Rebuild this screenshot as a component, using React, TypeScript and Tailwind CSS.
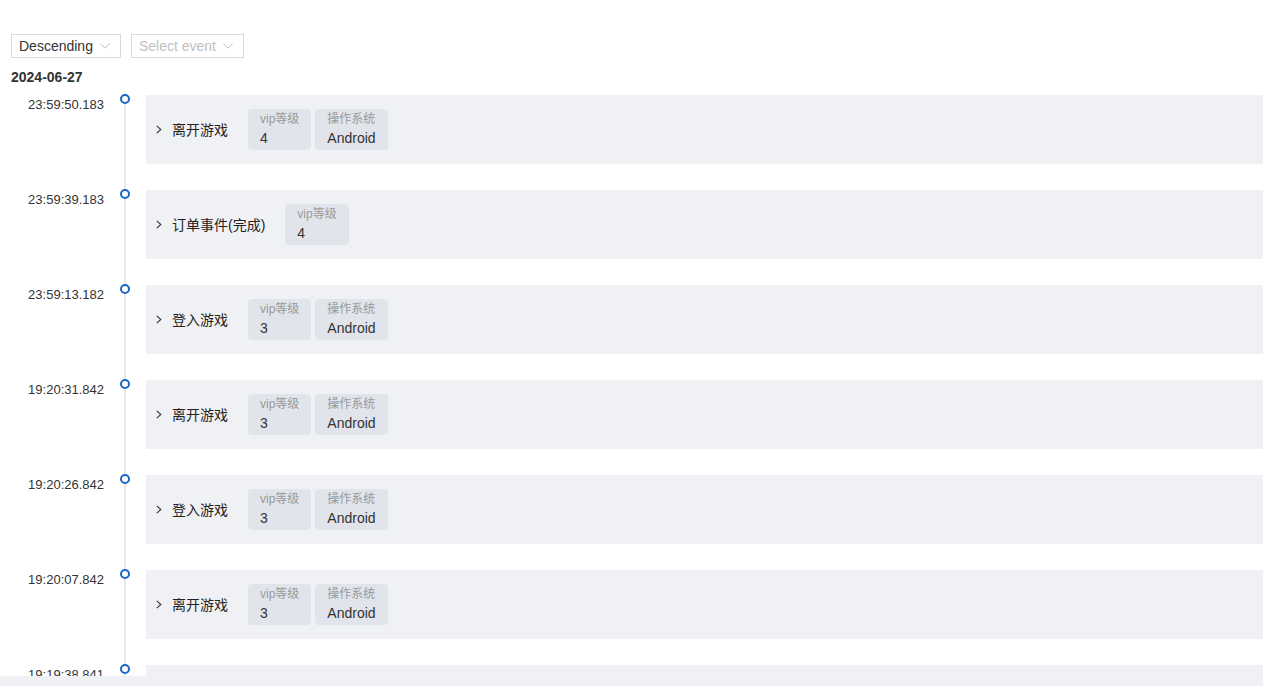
import React from "react";

type Tag = { label: string; value: string };
type Row = { time: string; title: string; tags: Tag[] };

const rows: Row[] = [
  { time: "23:59:50.183", title: "离开游戏", tags: [{ label: "vip等级", value: "4" }, { label: "操作系统", value: "Android" }] },
  { time: "23:59:39.183", title: "订单事件(完成)", tags: [{ label: "vip等级", value: "4" }] },
  { time: "23:59:13.182", title: "登入游戏", tags: [{ label: "vip等级", value: "3" }, { label: "操作系统", value: "Android" }] },
  { time: "19:20:31.842", title: "离开游戏", tags: [{ label: "vip等级", value: "3" }, { label: "操作系统", value: "Android" }] },
  { time: "19:20:26.842", title: "登入游戏", tags: [{ label: "vip等级", value: "3" }, { label: "操作系统", value: "Android" }] },
  { time: "19:20:07.842", title: "离开游戏", tags: [{ label: "vip等级", value: "3" }, { label: "操作系统", value: "Android" }] },
  { time: "19:19:38.841", title: "登入游戏", tags: [{ label: "vip等级", value: "3" }, { label: "操作系统", value: "Android" }] },
];

const font = { fontFamily: '"Liberation Sans", "Noto Sans CJK SC", sans-serif' };

function Chevron() {
  return (
    <svg width="10" height="6" viewBox="0 0 10 6" className="ml-[7px]">
      <polyline points="0.5,0.5 5,5.2 9.5,0.5" fill="none" stroke="#bfbfbf" strokeWidth="1" />
    </svg>
  );
}

function Select({ text, placeholder }: { text: string; placeholder?: boolean }) {
  return (
    <div className="flex h-[24px] items-center border border-[#d9d9d9] bg-white pl-[7px] pr-[10px]">
      <span className={`text-[14px] leading-none ${placeholder ? "text-[#bfbfbf]" : "text-[#333]"}`}>{text}</span>
      <Chevron />
    </div>
  );
}

export default function App() {
  return (
    <div className="h-[686px] w-full overflow-hidden bg-white" style={font}>
      <div className="h-[676px] overflow-hidden">
        <div className="flex gap-[10px] pl-[11px] pt-[34px]">
          <Select text="Descending" />
          <Select text="Select event" placeholder />
        </div>
        <div className="pl-[11px] pt-[9px] text-[14px] font-bold leading-[20px] text-[#333]">2024-06-27</div>
        <div className="pt-[8px]">
          {rows.map((r, i) => (
            <div key={i} className="flex h-[95px]">
              <div className="w-[104px] shrink-0 pt-[1px] text-right text-[13px] leading-[18px] text-[#333]">{r.time}</div>
              <div className="relative w-[42px] shrink-0">
                <div className="absolute left-[20px] top-[4px] bottom-0 w-[2px] bg-[#e8e8e8]" />
                <div className="absolute left-[16px] top-[-1px] h-[10px] w-[10px] rounded-full border-2 border-[#1a66c6] bg-white" />
              </div>
              <div className="flex h-[69px] flex-1 items-center bg-[#f0f1f5] pl-[10px]">
                <svg width="6" height="9" viewBox="0 0 6 9" className="mr-[10px]">
                  <polyline points="0.8,0.8 4.8,4.5 0.8,8.2" fill="none" stroke="#333" strokeWidth="1.1" />
                </svg>
                <span className="mr-[20px] text-[14px] leading-[20px] text-[#222]">{r.title}</span>
                <div className="flex gap-[4px]">
                  {r.tags.map((t, j) => (
                    <div key={j} className="flex h-[41px] flex-col justify-center rounded-[4px] bg-[#e1e4eb] px-[12px]">
                      <span className="text-[12px] leading-[18px] text-[#999]">{t.label}</span>
                      <span className="text-[14px] leading-[21px] text-[#333]">{t.value}</span>
                    </div>
                  ))}
                </div>
              </div>
            </div>
          ))}
        </div>
      </div>
      <div className="h-[10px] bg-[#f0f1f5]" />
    </div>
  );
}
